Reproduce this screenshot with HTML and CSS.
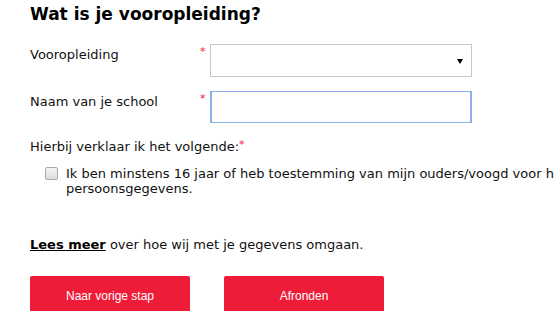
FILE: index.html
```html
<!DOCTYPE html>
<html lang="nl">
<head>
<meta charset="utf-8">
<title>Wat is je vooropleiding?</title>
<link rel="stylesheet" href="styles.css">
</head>
<body>
<div class="page">
  <h1 class="title">Wat is je vooropleiding?</h1>
  <div class="row row-select">
    <label class="label">Vooropleiding</label>
    <span class="req">*</span>
    <div class="select"><span class="arrow"></span></div>
  </div>
  <div class="row row-input">
    <label class="label">Naam van je school</label>
    <span class="req">*</span>
    <div class="input"></div>
  </div>
  <p class="declare">Hierbij verklaar ik het volgende:<span class="req-inline">*</span></p>
  <div class="check">
    <span class="box"></span>
    <span class="check-text">Ik ben minstens 16 jaar of heb toestemming van mijn ouders/voogd voor het verwerken van mijn persoonsgegevens.</span>
  </div>
  <p class="more"><a class="more-link">Lees meer</a> over hoe wij met je gegevens omgaan.</p>
  <div class="buttons">
    <button class="btn">Naar vorige stap</button>
    <button class="btn">Afronden</button>
  </div>
</div>
</body>
</html>
```
FILE: styles.css
```css
html, body {
  margin: 0;
  padding: 0;
  background: #fff;
  overflow: hidden;
}
.page {
  width: 760px;
  padding-left: 30px;
  font-family: "DejaVu Sans", Verdana, sans-serif;
  font-size: 13px;
  color: #111;
}
.title {
  font-size: 17px;
  font-weight: bold;
  margin: 3px 0 0;
  line-height: 22px;
  color: #000;
}
.row {
  display: grid;
  grid-template-columns: 170px 10px 262px;
  align-items: start;
}
.row-select { margin-top: 19px; }
.row-input { margin-top: 14px; }
.label {
  line-height: 16px;
  padding-top: 3px;
}
.req, .req-inline {
  color: #ee1c38;
  font-size: 11px;
  line-height: 10px;
}
.req { padding-top: 3px; }
.req-inline { vertical-align: 3px; }
.select {
  box-sizing: border-box;
  height: 33px;
  border: 1px solid #c8c8c8;
  position: relative;
}
.arrow {
  position: absolute;
  right: 8px;
  top: 14px;
  width: 0;
  height: 0;
  border-left: 3px solid transparent;
  border-right: 3px solid transparent;
  border-top: 5px solid #000;
}
.input {
  box-sizing: border-box;
  height: 32px;
  border: 1px solid #8ab1ec;
  border-left-width: 2px;
  border-right-width: 2px;
}
.declare {
  margin: 16px 0 0;
  line-height: 16px;
}
.check {
  display: flex;
  align-items: flex-start;
  gap: 8px;
  margin: 11px 0 0 15px;
  width: 720px;
}
.box {
  flex: none;
  box-sizing: border-box;
  width: 13px;
  height: 13px;
  margin-top: 1px;
  border: 1px solid #a9a9a9;
  border-radius: 2px;
  background: linear-gradient(#f4f4f4, #dcdcdc);
}
.check-text {
  line-height: 15px;
}
.more {
  margin: 41px 0 0;
  line-height: 16px;
}
.more-link {
  font-weight: bold;
  text-decoration: underline;
  color: #000;
}
.buttons {
  display: flex;
  gap: 34px;
  margin-top: 23px;
}
.btn {
  width: 160px;
  height: 40px;
  border: none;
  border-radius: 2px;
  background: #ee1c38;
  color: #fff;
  font-family: "Liberation Sans", Arial, sans-serif;
  font-size: 12px;
  padding: 0;
}
```
